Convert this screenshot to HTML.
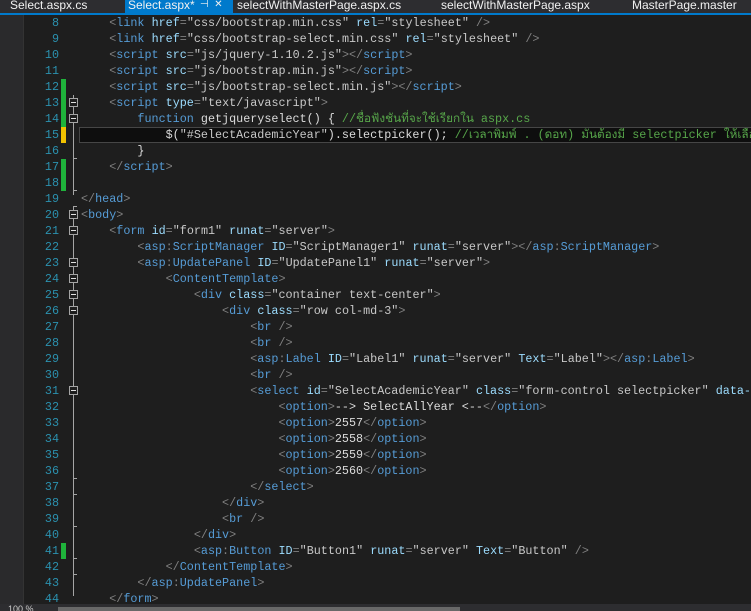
<!DOCTYPE html>
<html style="overflow:hidden"><head><meta charset="utf-8"><style>
html,body{overflow:hidden}
body{margin:0;width:751px;height:611px;background:#1e1e1e;position:relative;font-family:"Liberation Mono",monospace}
.tabs{position:absolute;left:0;top:0;width:751px;height:13px;background:#2d2d30;font:12px "Liberation Sans",sans-serif;color:#f1f1f1;overflow:hidden}
.tabs span{position:absolute;top:-2px;white-space:nowrap}
.tabline{position:absolute;left:0;top:13px;width:751px;height:2px;background:#007acc}
.act{position:absolute;left:125px;top:0;width:108px;height:13px;background:#007acc}
.lstrip{position:absolute;left:0;top:15px;width:23px;height:590px;background:#2a2a2c;border-right:1px solid #333}
.ln{position:absolute;left:24px;width:35px;text-align:right;color:#2b91af;font-size:11.75px;line-height:16px}
.code{position:absolute;left:81px;width:670px;overflow:hidden;white-space:pre;font-size:11.75px;line-height:16px;color:#dcdcdc}
.b{color:#808080}.t{color:#569cd6}.a{color:#9cdcfe}.v{color:#c8c8c8}.c{color:#57a64a;font-family:"Liberation Mono","Noto Sans CJK SC",monospace}.k{color:#569cd6}
.bar{position:absolute;left:61px;width:5px;height:16px}
.fold{position:absolute;left:69px;width:7px;height:7px;border:1px solid #a5a5a5;background:#1e1e1e}
.fold:after{content:"";position:absolute;left:1px;top:3px;width:5px;height:1px;background:#e0e0e0}
.vl{position:absolute;left:73px;width:1px;background:#a5a5a5}
.tk{position:absolute;left:73px;width:4px;height:1px;background:#a5a5a5}
.hl{position:absolute;left:79px;top:127px;width:680px;height:14px;border:1px solid #464646;border-right:none;background:#0e0e0e}
.bot{position:absolute;left:0;top:604px;width:751px;height:7px;background:#2d2d30;overflow:hidden}
.thumb{position:absolute;left:58px;top:607px;width:402px;height:4px;background:#686868}
</style></head><body>
<div class="tabs"><div class="act"></div>
<span style="left:10px">Select.aspx.cs</span>
<span style="left:128px">Select.aspx*</span>
<span style="left:200px;font-size:10px;top:-1px">⊣ &nbsp;✕</span>
<span style="left:237px">selectWithMasterPage.aspx.cs</span>
<span style="left:441px">selectWithMasterPage.aspx</span>
<span style="left:632px">MasterPage.master</span></div>
<div class="tabline"></div>
<div class="lstrip"></div>
<div class="hl"></div>
<div id="g"></div>
<div class="code" style="top:15px"><span>    </span><span class="b">&lt;</span><span class="t">link</span> <span class="a">href</span><span class="b">=</span><span class="v">"css/bootstrap.min.css"</span> <span class="a">rel</span><span class="b">=</span><span class="v">"stylesheet"</span> <span class="b">/&gt;</span>
    <span class="b">&lt;</span><span class="t">link</span> <span class="a">href</span><span class="b">=</span><span class="v">"css/bootstrap-select.min.css"</span> <span class="a">rel</span><span class="b">=</span><span class="v">"stylesheet"</span> <span class="b">/&gt;</span>
    <span class="b">&lt;</span><span class="t">script</span> <span class="a">src</span><span class="b">=</span><span class="v">"js/jquery-1.10.2.js"</span><span class="b">&gt;&lt;/</span><span class="t">script</span><span class="b">&gt;</span>
    <span class="b">&lt;</span><span class="t">script</span> <span class="a">src</span><span class="b">=</span><span class="v">"js/bootstrap.min.js"</span><span class="b">&gt;&lt;/</span><span class="t">script</span><span class="b">&gt;</span>
    <span class="b">&lt;</span><span class="t">script</span> <span class="a">src</span><span class="b">=</span><span class="v">"js/bootstrap-select.min.js"</span><span class="b">&gt;&lt;/</span><span class="t">script</span><span class="b">&gt;</span>
    <span class="b">&lt;</span><span class="t">script</span> <span class="a">type</span><span class="b">=</span><span class="v">"text/javascript"</span><span class="b">&gt;</span>
        <span class="k">function</span> getjqueryselect() { <span class="c">//ชื่อฟังชันที่จะใช้เรียกใน aspx.cs</span>
            $(<span class="v">"#SelectAcademicYear"</span>).selectpicker(); <span class="c">//เวลาพิมพ์ . (ดอท) มันต้องมี selectpicker ให้เลือก</span>
        }
    <span class="b">&lt;/</span><span class="t">script</span><span class="b">&gt;</span>

<span class="b">&lt;/</span><span class="t">head</span><span class="b">&gt;</span>
<span class="b">&lt;</span><span class="t">body</span><span class="b">&gt;</span>
    <span class="b">&lt;</span><span class="t">form</span> <span class="a">id</span><span class="b">=</span><span class="v">"form1"</span> <span class="a">runat</span><span class="b">=</span><span class="v">"server"</span><span class="b">&gt;</span>
        <span class="b">&lt;</span><span class="t">asp</span><span class="b">:</span><span class="t">ScriptManager</span> <span class="a">ID</span><span class="b">=</span><span class="v">"ScriptManager1"</span> <span class="a">runat</span><span class="b">=</span><span class="v">"server"</span><span class="b">&gt;&lt;/</span><span class="t">asp</span><span class="b">:</span><span class="t">ScriptManager</span><span class="b">&gt;</span>
        <span class="b">&lt;</span><span class="t">asp</span><span class="b">:</span><span class="t">UpdatePanel</span> <span class="a">ID</span><span class="b">=</span><span class="v">"UpdatePanel1"</span> <span class="a">runat</span><span class="b">=</span><span class="v">"server"</span><span class="b">&gt;</span>
            <span class="b">&lt;</span><span class="t">ContentTemplate</span><span class="b">&gt;</span>
                <span class="b">&lt;</span><span class="t">div</span> <span class="a">class</span><span class="b">=</span><span class="v">"container text-center"</span><span class="b">&gt;</span>
                    <span class="b">&lt;</span><span class="t">div</span> <span class="a">class</span><span class="b">=</span><span class="v">"row col-md-3"</span><span class="b">&gt;</span>
                        <span class="b">&lt;</span><span class="t">br</span> <span class="b">/&gt;</span>
                        <span class="b">&lt;</span><span class="t">br</span> <span class="b">/&gt;</span>
                        <span class="b">&lt;</span><span class="t">asp</span><span class="b">:</span><span class="t">Label</span> <span class="a">ID</span><span class="b">=</span><span class="v">"Label1"</span> <span class="a">runat</span><span class="b">=</span><span class="v">"server"</span> <span class="a">Text</span><span class="b">=</span><span class="v">"Label"</span><span class="b">&gt;&lt;/</span><span class="t">asp</span><span class="b">:</span><span class="t">Label</span><span class="b">&gt;</span>
                        <span class="b">&lt;</span><span class="t">br</span> <span class="b">/&gt;</span>
                        <span class="b">&lt;</span><span class="t">select</span> <span class="a">id</span><span class="b">=</span><span class="v">"SelectAcademicYear"</span> <span class="a">class</span><span class="b">=</span><span class="v">"form-control selectpicker"</span> <span class="a">data-live-search</span>
                            <span class="b">&lt;</span><span class="t">option</span><span class="b">&gt;</span>--&gt; SelectAllYear &lt;--<span class="b">&lt;/</span><span class="t">option</span><span class="b">&gt;</span>
                            <span class="b">&lt;</span><span class="t">option</span><span class="b">&gt;</span>2557<span class="b">&lt;/</span><span class="t">option</span><span class="b">&gt;</span>
                            <span class="b">&lt;</span><span class="t">option</span><span class="b">&gt;</span>2558<span class="b">&lt;/</span><span class="t">option</span><span class="b">&gt;</span>
                            <span class="b">&lt;</span><span class="t">option</span><span class="b">&gt;</span>2559<span class="b">&lt;/</span><span class="t">option</span><span class="b">&gt;</span>
                            <span class="b">&lt;</span><span class="t">option</span><span class="b">&gt;</span>2560<span class="b">&lt;/</span><span class="t">option</span><span class="b">&gt;</span>
                        <span class="b">&lt;/</span><span class="t">select</span><span class="b">&gt;</span>
                    <span class="b">&lt;/</span><span class="t">div</span><span class="b">&gt;</span>
                    <span class="b">&lt;</span><span class="t">br</span> <span class="b">/&gt;</span>
                <span class="b">&lt;/</span><span class="t">div</span><span class="b">&gt;</span>
                <span class="b">&lt;</span><span class="t">asp</span><span class="b">:</span><span class="t">Button</span> <span class="a">ID</span><span class="b">=</span><span class="v">"Button1"</span> <span class="a">runat</span><span class="b">=</span><span class="v">"server"</span> <span class="a">Text</span><span class="b">=</span><span class="v">"Button"</span> <span class="b">/&gt;</span>
            <span class="b">&lt;/</span><span class="t">ContentTemplate</span><span class="b">&gt;</span>
        <span class="b">&lt;/</span><span class="t">asp</span><span class="b">:</span><span class="t">UpdatePanel</span><span class="b">&gt;</span>
    <span class="b">&lt;/</span><span class="t">form</span><span class="b">&gt;</span></div>
<div class="bot"><span style="position:absolute;left:8px;top:1px;font:9px 'Liberation Sans',sans-serif;color:#ccc;line-height:8px">100 %</span></div>
<div class="thumb"></div>
<script>
var g=document.getElementById('g'),h='';
function T(n){return 15+(n-8)*16;}
for(var n=8;n<=44;n++)h+='<div class="ln" style="top:'+T(n)+'px">'+n+'</div>';
[[12,'#1fb33b'],[13,'#1fb33b'],[14,'#1fb33b'],[15,'#f2c200'],[17,'#1fb33b'],[18,'#1fb33b'],[41,'#1fb33b']].forEach(function(b){h+='<div class="bar" style="top:'+T(b[0])+'px;background:'+b[1]+'"></div>';});
h+='<div class="vl" style="top:'+T(13)+'px;height:'+(T(19)-T(13)+4)+'px"></div>';
h+='<div class="vl" style="top:'+T(20)+'px;height:'+(T(45)-T(20)-11)+'px"></div>';
[16,18,19,36,37,39,41,42].forEach(function(n){h+='<div class="tk" style="top:'+(T(n)+15)+'px"></div>';});
[13,14,20,21,23,24,25,26,31].forEach(function(n){h+='<div class="fold" style="top:'+(T(n)+3)+'px"></div>';});
g.innerHTML=h;
</script>
</body></html>
